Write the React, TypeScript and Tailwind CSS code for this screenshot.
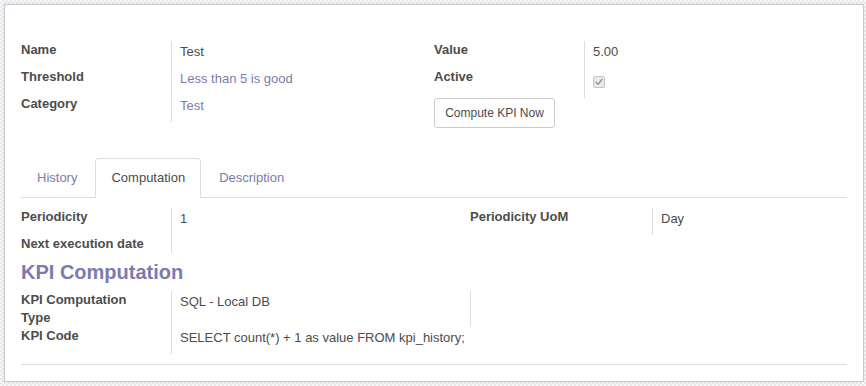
import React from 'react';

const LINK = 'text-[#7c7bad]';

const Label = ({ children, w = 'w-[150px]' }: { children: React.ReactNode; w?: string }) => (
    <div className={`${w} shrink-0 font-bold leading-[18px]`}>{children}</div>
);

const Value = ({ children, className = '' }: { children?: React.ReactNode; className?: string }) => (
    <div className={`flex-1 border-l border-[#dddddd] pl-[8px] pt-[2px] leading-[18px] ${className}`}>{children}</div>
);

const Checkbox = () => (
    <div className="mt-[6px] w-[12px] h-[12px] rounded-[2px] border border-[#c4c4c4] bg-[#ebebeb] flex items-center justify-center">
        <svg width="8" height="8" viewBox="0 0 8 8" fill="none">
            <path d="M1 4.2L3 6.2L7 1.6" stroke="#9a9a9a" strokeWidth="1.6" strokeLinecap="round" strokeLinejoin="round" />
        </svg>
    </div>
);

export default function App() {
    const tabs = ['History', 'Computation', 'Description'];

    return (
        <div
            className="w-[866px] h-[386px] overflow-hidden pt-[4px] pl-[4px] bg-[repeating-conic-gradient(#e9e9e9_0%_25%,#f7f7f7_0%_50%)] bg-[length:4px_4px] text-[13px] text-[#4c4c4c]"
            style={{ fontFamily: '"Liberation Sans", Arial, sans-serif' }}
        >
            <div className="w-[860px] h-[378px] border border-[#c9c9d6] bg-white shadow-[0_0_3px_rgba(0,0,0,0.08)] px-[16px] pt-[36px]">
                {/* Header group */}
                <div className="flex">
                    <div className="w-[413px]">
                        <div className="flex h-[27px]">
                            <Label>Name</Label>
                            <Value>Test</Value>
                        </div>
                        <div className="flex h-[27px]">
                            <Label>Threshold</Label>
                            <Value className={LINK}>Less than 5 is good</Value>
                        </div>
                        <div className="flex h-[27px]">
                            <Label>Category</Label>
                            <Value className={LINK}>Test</Value>
                        </div>
                    </div>
                    <div className="flex-1">
                        <div className="flex h-[27px]">
                            <Label>Value</Label>
                            <Value>5.00</Value>
                        </div>
                        <div className="flex h-[30px]">
                            <Label>Active</Label>
                            <Value>
                                <Checkbox />
                            </Value>
                        </div>
                        <button className="h-[30px] w-[121px] border border-[#cccccc] rounded-[3px] bg-white text-[12px] text-[#4c4c4c]">
                            Compute KPI Now
                        </button>
                    </div>
                </div>

                {/* Notebook */}
                <div className="mt-[30px] flex h-[40px] border-b border-[#dddddd]">
                    {tabs.map((t) => (
                        <div
                            key={t}
                            className={`h-[40px] -mb-px mr-[2px] px-[15px] pt-[10px] leading-[18px] border rounded-t-[4px] ${
                                t === 'Computation'
                                    ? 'border-[#dddddd] border-b-white bg-white text-[#4c4c4c]'
                                    : 'border-transparent text-[#7c7bad]'
                            }`}
                        >
                            {t}
                        </div>
                    ))}
                </div>

                <div className="pt-[10px]">
                    <div className="flex">
                        <div className="w-[449px]">
                            <div className="flex h-[27px]">
                                <Label>Periodicity</Label>
                                <Value>1</Value>
                            </div>
                            <div className="flex h-[18px]">
                                <Label>Next execution date</Label>
                                <Value className="pt-0" />
                            </div>
                        </div>
                        <div className="flex-1">
                            <div className="flex h-[27px]">
                                <Label w="w-[182px]">Periodicity UoM</Label>
                                <Value>Day</Value>
                            </div>
                        </div>
                    </div>

                    <div className="h-[38px] pt-[6px] text-[20px] leading-[26px] font-bold text-[#7c7bad]">KPI Computation</div>

                    <div className="flex h-[36px]">
                        <Label>
                            KPI Computation
                            <br />
                            Type
                        </Label>
                        <div className="w-[299px] border-l border-[#dddddd] pl-[8px] pt-[2px] leading-[18px]">SQL - Local DB</div>
                        <div className="flex-1 border-l border-[#dddddd]" />
                    </div>
                    <div className="flex h-[27px]">
                        <Label>KPI Code</Label>
                        <Value>SELECT count(*) + 1 as value FROM kpi_history;</Value>
                    </div>

                    <div className="mt-[10px] border-t border-[#dddddd]" />
                </div>
            </div>
        </div>
    );
}
